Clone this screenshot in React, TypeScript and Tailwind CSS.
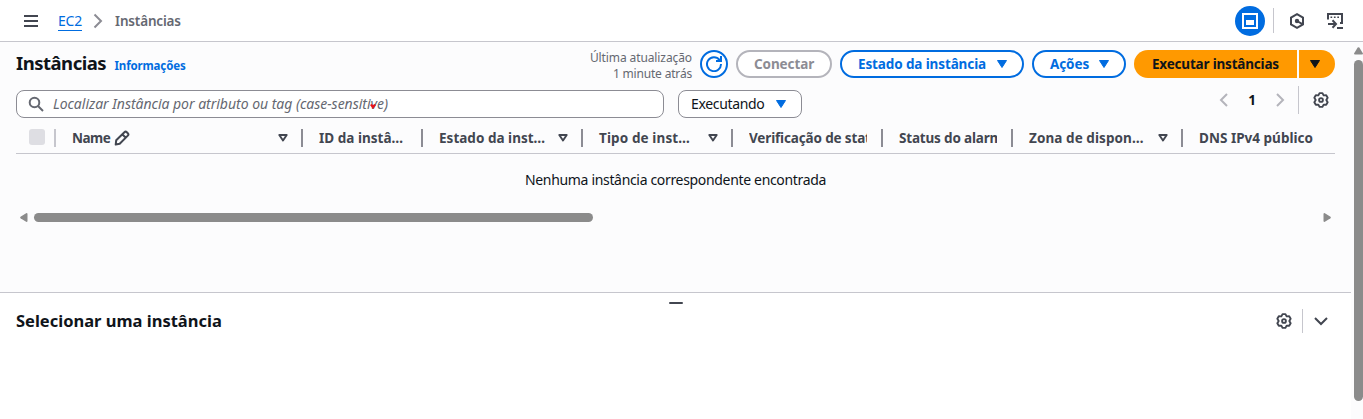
import type { ReactNode } from "react";

function Caret({ className = "" }: { className?: string }) {
  return (
    <svg className={className} width="12" height="10" viewBox="0 0 12 10" fill="currentColor">
      <path d="M1.5 1.5h9L6 8.5z" stroke="currentColor" strokeWidth="1" strokeLinejoin="round" />
    </svg>
  );
}

function SortIcon() {
  return (
    <svg width="10" height="8" viewBox="0 0 10 8" fill="none" stroke="currentColor" strokeWidth="1.9" strokeLinejoin="round">
      <path d="M1.3 1h7.4L5 6.6z" />
    </svg>
  );
}

function Chevron({ className = "", d = "M4.5 1.5 11 8l-6.5 6.5" }: { className?: string; d?: string }) {
  return (
    <svg className={className} width="16" height="16" viewBox="0 0 16 16" fill="none" stroke="currentColor" strokeWidth="2">
      <path d={d} />
    </svg>
  );
}

function Gear() {
  return (
    <svg width="16" height="16" viewBox="0 0 16 16" fill="none" stroke="currentColor" strokeWidth="1.9" strokeLinejoin="round">
      <path d="M6.55 1.15h2.9l1.2 2.25 2.55-.08 1.46 2.52L13.3 8l1.36 2.16-1.46 2.52-2.55-.08-1.2 2.25h-2.9L5.35 12.6l-2.55.08-1.46-2.52L2.7 8 1.34 5.84 2.8 3.32l2.55.08z" />
      <circle cx="8" cy="8" r="1.9" />
    </svg>
  );
}

const columns: { label: string; width: string; track: string; sort?: boolean; clip?: string; edit?: boolean }[] = [
  { label: "Name", width: "w-[247px]", track: "tracking-[-0.5px]", sort: true, edit: true },
  { label: "ID da instâ…", width: "w-[120px]", track: "tracking-[0.02px]" },
  { label: "Estado da inst…", width: "w-[160px]", track: "tracking-[0.02px]", sort: true },
  { label: "Tipo de inst…", width: "w-[150px]", track: "tracking-[0.12px]", sort: true },
  { label: "Verificação de status", width: "w-[150px]", track: "tracking-[-0.15px]", clip: "w-[118px]" },
  { label: "Status do alarme", width: "w-[130px]", track: "tracking-[-0.18px]", clip: "w-[98px]" },
  { label: "Zona de dispon…", width: "w-[170px]", track: "tracking-[0.08px]", sort: true },
  { label: "DNS IPv4 público", width: "w-[136px]", track: "tracking-[0.02px]" },
];

function OutlineButton({ children, className }: { children: ReactNode; className: string }) {
  return (
    <button className={`flex h-7 shrink-0 items-center rounded-full border-2 bg-white pl-4 text-[13.5px] font-bold ${className}`}>
      {children}
    </button>
  );
}

function TopBar() {
  return (
    <header className="flex h-[42px] shrink-0 items-center border-b border-[#c6c6cd] bg-white pr-5 pl-[23px] text-[#424650]">
      <svg width="16" height="16" viewBox="0 0 16 16" stroke="currentColor" strokeWidth="2">
        <path d="M1 3h14M1 8h14M1 13h14" />
      </svg>
      <a className="mt-px ml-[19px] border-b border-[#006ce0] text-sm leading-[18px] tracking-[-0.2px] text-[#006ce0]">EC2</a>
      <Chevron className="ml-2 text-[#8c8c94]" />
      <span className="mt-0.5 ml-[9px] text-[13.5px] font-semibold tracking-[-0.16px] text-[#656871]">Instâncias</span>
      <div className="ml-auto flex items-center">
        <span className="flex size-[30px] items-center justify-center rounded-full bg-[#006ce0] text-white">
          <svg width="16" height="16" viewBox="0 0 16 16" fill="none" stroke="currentColor" strokeWidth="2">
            <path d="M1 1h14v14H1z" />
            <path d="M4 7h8v5H4z" fill="currentColor" stroke="none" />
          </svg>
        </span>
        <span className="ml-2 h-[25px] w-px bg-[#c6c6cd]" />
        <svg className="ml-[15px]" width="16" height="16" viewBox="0 0 16 16" fill="none" stroke="currentColor" strokeWidth="2">
          <path d="M8 1.2 14 4.6v6.8L8 14.8 2 11.4V4.6zM8 8l5 2.8" />
          <circle cx="8" cy="8" r="1.2" fill="currentColor" />
        </svg>
        <svg className="ml-[22px]" width="16" height="16" viewBox="0 0 16 16" fill="none" stroke="currentColor" strokeWidth="2">
          <path d="M1 6.5V1h14v9h-2M1 11h8M5.500 7.300 9 11l-3.500 3.700M10 15h6" />
          <path d="M3.500 4.200h9" strokeWidth="1.5" strokeDasharray="1.700 1.700" />
        </svg>
      </div>
    </header>
  );
}

function Toolbar() {
  return (
    <div className="flex h-7 items-center">
      <h1 className="mb-0.5 w-[98.5px] text-[18.5px] leading-7 font-bold tracking-[-0.5px] whitespace-nowrap">Instâncias</h1>
      <a className="mt-1 text-[11.5px] font-bold tracking-[-0.14px] text-[#006ce0]">Informações</a>
      <div className="mt-1 ml-auto text-right text-xs leading-4 text-[#656871]">
        <div className="tracking-[-0.1px]">Última atualização</div>
        <div className="tracking-[-0.18px]">1 minute atrás</div>
      </div>
      <button className="ml-2 flex size-7 items-center justify-center rounded-full border-2 border-[#006ce0] bg-white text-[#006ce0]">
        <svg width="16" height="16" viewBox="0 0 16 16" fill="none" stroke="currentColor" strokeWidth="2">
          <path d="M15 8A7 7 0 1 1 13.5 3.8L15 5M10 5h5V0" />
        </svg>
      </button>
      <OutlineButton className="ml-2 w-24 border-[#b4b4bb] tracking-[-0.1px] text-[#8c8c94]">Conectar</OutlineButton>
      <OutlineButton className="ml-2 w-[184px] border-[#006ce0] tracking-[-0.12px] text-[#006ce0]">
        Estado da instância
        <Caret className="mr-[14px] ml-auto" />
      </OutlineButton>
      <OutlineButton className="ml-2 w-[94px] border-[#006ce0] tracking-[-0.1px] text-[#006ce0]">
        Ações
        <Caret className="mr-[14px] ml-auto" />
      </OutlineButton>
      <button className="ml-2 h-7 w-[163px] rounded-l-full bg-[#ff9900] pl-[18px] text-left text-[13.5px] font-bold tracking-[-0.19px]">
        Executar instâncias
      </button>
      <button className="ml-0.5 flex h-7 w-9 items-center rounded-r-full bg-[#ff9900] pl-2.5">
        <Caret />
      </button>
    </div>
  );
}

function Filters() {
  return (
    <div className="mt-3 flex h-7 items-center text-sm">
      <div className="relative flex h-7 w-[648px] items-center rounded-lg border border-[#8c8c94] bg-white pl-[11px] text-[#656871]">
        <svg width="16" height="16" viewBox="0 0 16 16" fill="none" stroke="currentColor" strokeWidth="2">
          <circle cx="6.5" cy="6.5" r="4.8" />
          <path d="m10 10 5 5" />
        </svg>
        <span className="ml-[9px] italic tracking-[-0.02px]">Localizar Instância por atributo ou tag (case-sensitive)</span>
        <svg className="absolute top-[12px] left-[353px] text-[#e8131b]" width="6" height="6" viewBox="0 0 6 6" fill="currentColor">
          <path d="M0 2 1.5 1 3 2l1.5-1L6 2 3 6z" />
        </svg>
      </div>
      <button className="ml-[14px] flex h-7 w-[124px] items-center rounded-lg border border-[#8c8c94] bg-white pl-3">
        <span className="tracking-[-0.35px]">Executando</span>
        <Caret className="mr-[14px] ml-auto text-[#006ce0]" />
      </button>
      <div className="mb-2 ml-auto flex h-7 items-center">
        <Chevron className="text-[#b4b4bb]" d="M11 2 5 8l6 6" />
        <span className="mt-0.5 w-10 text-center text-[13.5px] font-bold">1</span>
        <Chevron className="text-[#b4b4bb]" d="m5 2 6 6-6 6" />
        <span className="ml-[10px] h-7 w-px bg-[#c6c6cd]" />
        <span className="mr-[6px] ml-[14px] text-[#424650]">
          <Gear />
        </span>
      </div>
    </div>
  );
}

function TableHeader() {
  return (
    <div className="mt-1 flex h-8 w-full items-center border-b border-[#c6c6cd] text-[13.5px] font-bold text-[#424650]">
      <span className="mb-0.5 ml-[13px] size-4 shrink-0 rounded-[3px] bg-[#dedee3]" />
      <span className="ml-[9px] h-[18px] w-0.5 shrink-0 bg-[#c6c6cd]" />
      {columns.map((c, i) => (
        <div key={c.label} className={`flex h-[18px] shrink-0 items-center pl-4 whitespace-nowrap ${i < columns.length - 1 ? "border-r-2 border-[#8c8c94]" : ""} ${c.width}`}>
          <span className={`pt-0.5 ${c.track} ${c.clip ? `${c.clip} overflow-hidden` : ""}`}>{c.label}</span>
          {c.edit && (
            <svg className="ml-1" width="16" height="16" viewBox="0 0 16 16" fill="none" stroke="currentColor" strokeWidth="2" strokeLinejoin="round">
              <path d="m2.2 10.3 8.2-8.1a1.7 1.7 0 0 1 2.4 0l1 1a1.7 1.7 0 0 1 0 2.4l-8.1 8.2-4 .7zM8.500 4.500l3 3" />
            </svg>
          )}
          {c.sort && (
            <span className="mr-[13px] ml-auto">
              <SortIcon />
            </span>
          )}
        </div>
      ))}
    </div>
  );
}

function HorizontalScrollbar() {
  return (
    <div className="mt-[22px] flex h-[9px] items-center px-1 text-[#8b8b8b]">
      <svg width="8" height="9" viewBox="0 0 8 9" fill="currentColor">
        <path d="M6.5 0Q7.5 0 7.5 1v7q0 1-1 1L.5 5.3Q-.2 4.5.5 3.7z" />
      </svg>
      <span className="ml-1.5 h-[9px] w-[559px] rounded-full bg-[#8b8b8b]" />
      <svg className="ml-auto" width="8" height="9" viewBox="0 0 8 9" fill="currentColor">
        <path d="M1.5 0Q.5 0 .5 1v7q0 1 1 1l6-3.700q.7-.8 0-1.600z" />
      </svg>
    </div>
  );
}

export default function App() {
  return (
    <div className="flex h-[419px] w-[1363px] flex-col overflow-hidden bg-[#fcfcfd] font-['Noto_Sans',sans-serif] text-[#0f141a]">
      <TopBar />
      <div className="flex min-h-0 flex-1">
        <div className="flex w-[1351px] flex-col">
          <main className="h-[250px] shrink-0 overflow-hidden pt-2 pr-4 pl-4">
            <Toolbar />
            <Filters />
            <TableHeader />
            <p className="mt-[15px] text-center text-sm leading-[22px] tracking-[-0.33px]">Nenhuma instância correspondente encontrada</p>
            <HorizontalScrollbar />
          </main>
          <section className="flex-1 border-t border-[#c6c6cd] bg-white">
            <div className="mx-auto mt-[9px] h-0.5 w-[14px] rounded-full bg-[#424650]" />
            <div className="mt-[5px] flex h-6 items-center pr-[22px] pl-4 text-[#424650]">
              <h2 className="text-[16.5px] font-bold text-[#0f141a]">Selecionar uma instância</h2>
              <span className="ml-auto">
                <Gear />
              </span>
              <span className="ml-[10px] h-6 w-px bg-[#c6c6cd]" />
              <Chevron className="ml-[10px]" d="m2 5 6 6 6-6" />
            </div>
          </section>
        </div>
        <div className="flex w-3 flex-col items-end pt-[5px] text-[#8b8b8b]">
          <svg width="9" height="8" viewBox="0 0 9 8" fill="currentColor">
            <path d="M1 7.5Q0 7.5 0 6.5L3.7.5q.8-.7 1.6 0L9 6.500q0 1-1 1z" />
          </svg>
          <span className="mt-[5px] h-[341px] w-[9px] rounded-full bg-[#8b8b8b]" />
        </div>
      </div>
    </div>
  );
}
